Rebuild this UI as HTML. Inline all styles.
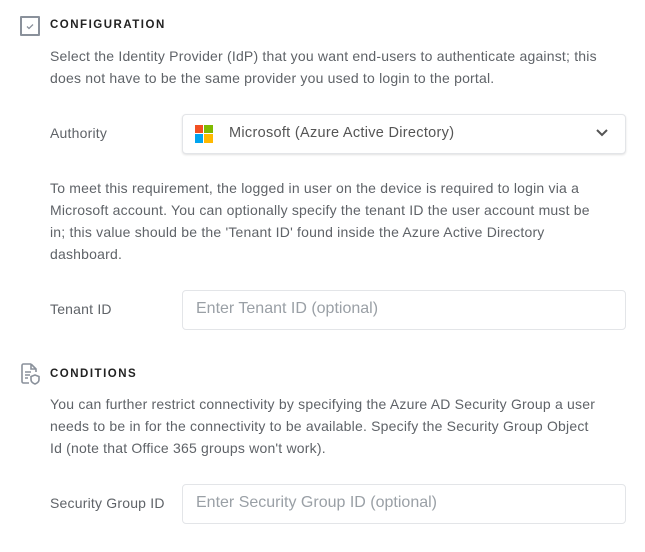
<!DOCTYPE html>
<html><head><style>
body{margin:0;width:645px;height:552px;background:#fff;font-family:"Liberation Sans",sans-serif;color:#5f6368;position:relative;overflow:hidden}
.a{position:absolute}
.t{font-size:11.5px;font-weight:bold;letter-spacing:1.5px;color:#222}
.p{font-size:14px;line-height:22px;white-space:nowrap;letter-spacing:0.2px}
.lbl{font-size:14px;letter-spacing:0.2px}
.box{border:1px solid #e3e5e8;border-radius:4px;background:#fff;box-sizing:border-box}
.ph{font-size:16px;color:#9aa0a6}
</style></head><body>
<div class="a" style="left:20px;top:16px;width:16px;height:16px;border:2px solid #8a919b;border-radius:1px"></div>
<svg class="a" style="left:24px;top:20px" width="12" height="12" viewBox="0 0 12 12"><path d="M3 6.5l2 2 4-4" stroke="#8a919b" stroke-width="1.3" fill="none"/></svg>
<div class="a t" style="left:50px;top:19px">CONFIGURATION</div>
<div class="a p" style="left:50px;top:45px">Select the Identity Provider (IdP) that you want end-users to authenticate against; this<br>does not have to be the same provider you used to login to the portal.</div>
<div class="a lbl" style="left:50px;top:125px">Authority</div>
<div class="a box" style="left:182px;top:114px;width:444px;height:40px;box-shadow:0 1px 2px rgba(0,0,0,.12)"></div>
<div class="a" style="left:195px;top:125px;width:8px;height:8px;background:#f25022"></div>
<div class="a" style="left:204px;top:125px;width:9px;height:8px;background:#7fba00"></div>
<div class="a" style="left:195px;top:134px;width:8px;height:9px;background:#00a4ef"></div>
<div class="a" style="left:204px;top:134px;width:9px;height:9px;background:#ffb900"></div>
<div class="a" style="left:229px;top:125px;font-size:14.5px;color:#555;letter-spacing:0.3px">Microsoft (Azure Active Directory)</div>
<svg class="a" style="left:595px;top:128px" width="14" height="10" viewBox="0 0 14 10"><path d="M2 2l5 5 5-5" stroke="#555" stroke-width="2" fill="none"/></svg>
<div class="a p" style="left:50px;top:177px">To meet this requirement, the logged in user on the device is required to login via a<br>Microsoft account. You can optionally specify the tenant ID the user account must be<br>in; this value should be the 'Tenant ID' found inside the Azure Active Directory<br>dashboard.</div>
<div class="a lbl" style="left:50px;top:301px">Tenant ID</div>
<div class="a box" style="left:182px;top:290px;width:444px;height:40px"></div>
<div class="a ph" style="left:196px;top:300px">Enter Tenant ID (optional)</div>
<svg class="a" style="left:20px;top:363px" width="20" height="22" viewBox="0 0 20 22"><path d="M11 1H3.5A1.5 1.5 0 0 0 2 2.5v16A1.5 1.5 0 0 0 3.5 20H9M11 1l5 5v3M11 1v5h5M5 9h6M5 12h5M5 15h3" stroke="#8a919b" stroke-width="1.6" fill="none"/><path d="M15 12l4 1.5v3c0 2.5-2 3.8-4 4.5-2-.7-4-2-4-4.5v-3z" stroke="#8a919b" stroke-width="1.6" fill="none"/></svg>
<div class="a t" style="left:50px;top:368px">CONDITIONS</div>
<div class="a p" style="left:50px;top:393px">You can further restrict connectivity by specifying the Azure AD Security Group a user<br>needs to be in for the connectivity to be available. Specify the Security Group Object<br>Id (note that Office 365 groups won't work).</div>
<div class="a lbl" style="left:50px;top:495px">Security Group ID</div>
<div class="a box" style="left:182px;top:484px;width:444px;height:40px"></div>
<div class="a ph" style="left:196px;top:494px">Enter Security Group ID (optional)</div>
</body></html>
